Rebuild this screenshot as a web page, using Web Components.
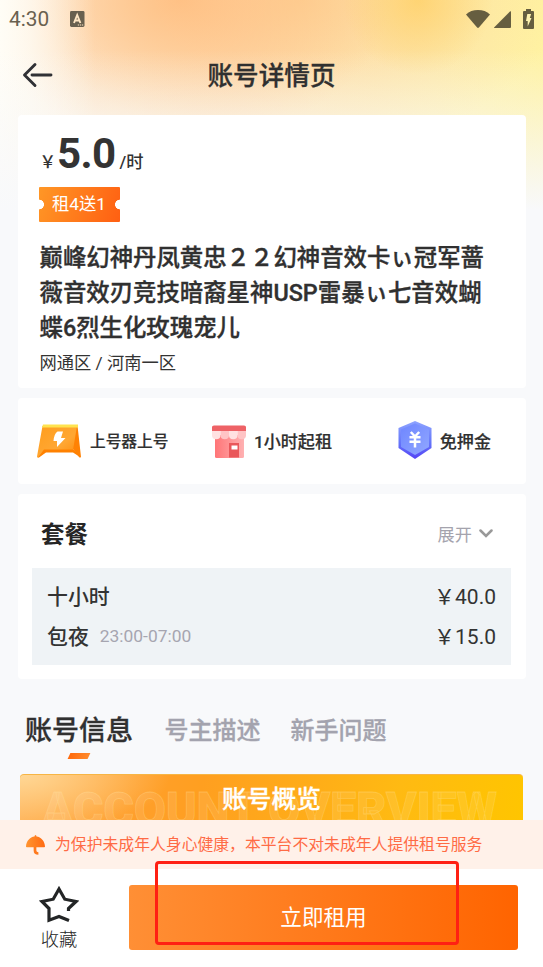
<!DOCTYPE html>
<html lang="zh-CN">
<head>
<meta charset="utf-8">
<title>账号详情页</title>
<style>
html,body{margin:0;height:100%;overflow:hidden}
body{font-family:Roboto,"Noto Sans CJK SC",sans-serif;color:#333}
</style>
</head>
<body>
<rental-page></rental-page>
<script>
const define = (name, html) => customElements.define(name, class extends HTMLElement {
  constructor() {
    super();
    const t = document.createElement('template');
    t.innerHTML = html;
    this.attachShadow({mode: 'open'}).appendChild(t.content.cloneNode(true));
  }
});

define('status-bar', `
<style>
:host{display:flex;height:37px;align-items:center;box-sizing:border-box;padding:1px 9.500px 0 9px;color:#69604f;font-size:20.8px}
.n{margin-left:21px;margin-right:auto}
svg{display:block}
.w{margin-right:4px}.s{margin-right:12px}
</style>
<span>4:30</span>
<svg class="n" width="15" height="17" viewBox="0 0 15 17"><rect width="14.5" height="16" y="0" rx="1.4" fill="#69604f"/><path d="M4 12 7.2 4 10.4 12M5 9.5H9.4" stroke="#ffe6c4" stroke-width="1.9" fill="none"/><path d="M7.8 14h1.4m.8 0h1.2m.8 0h1.2" stroke="#ffe6c4" stroke-width="1.2"/></svg>
<svg class="w" width="24" height="18" viewBox="0 0 24 18"><path d="M0 4.4C3.2 1.4 7.2 0 12 0s8.800 1.400 12 4.400L12.900 17.500q-.9.900-1.800 0z" fill="#665e40"/></svg>
<svg class="s" width="17" height="17" viewBox="0 0 17 17"><path d="M17 .4V16q0 1-1 1H.5Q-.3 17 .3 16.300L16.200.3Z" fill="#665e40"/></svg>
<svg width="11" height="20" viewBox="0 0 11 20"><path d="M3 0h5v2h2q1 0 1 1v16q0 1-1 1H1q-1 0-1-1V3q0-1 1-1h2z" fill="#665e40"/><path d="M4.300 5h3.800L6.800 9H8.500L4.700 17.500V12H3z" fill="#fff3b0"/></svg>`);

define('nav-header', `
<style>
:host{display:grid;grid-template-columns:60px 1fr 60px;align-items:center;height:78px}
svg{display:block;margin:-2px 0 0 22px}
h1{margin:0;text-align:center;font-size:25.6px;line-height:36px;font-weight:500;color:#303030;-webkit-text-stroke:.3px}
</style>
<svg width="31" height="26" viewBox="0 0 31 26"><path d="M13 2.500 2.500 13 13 23.500M10 13h19" fill="none" stroke="#303135" stroke-width="2.900" stroke-linecap="round" stroke-linejoin="round"/></svg>
<h1><slot></slot></h1>`);

define('info-card', `<style>:host{display:block;background:#fff;border-radius:4px;box-sizing:border-box}</style><slot></slot>`);

define('price-tag', `
<style>
:host{display:flex;align-items:baseline;height:60px;line-height:60px;white-space:nowrap;font-weight:500}
.y{font-size:16.500px;width:17.500px}.v{font-size:42px;font-weight:700;letter-spacing:-.6px}.u{font-size:17.300px;margin-left:4px}
</style><span class="y">￥</span><span class="v"><slot></slot></span><span class="u">/时</span>`);

define('promo-ticket', `
<style>
:host{display:flex;align-items:center;justify-content:center;width:81px;height:35px;border-radius:1px;color:#fff;font-size:17.300px;line-height:35px;
background:radial-gradient(circle at 0 50%,#fff 4.600px,transparent 5.200px),radial-gradient(circle at 100% 50%,#fff 4.600px,transparent 5.200px),linear-gradient(110deg,#ff9726,#ff5f12)}
</style><slot></slot>`);

define('service-item', `
<style>
:host{display:flex;align-items:center;font-size:17.100px;font-weight:500;white-space:nowrap;line-height:24px;color:#303030;-webkit-text-stroke:.2px}
span{padding-top:2px}
</style><slot name="icon"></slot><span><slot></slot></span>`);

define('plan-row', `
<style>
:host{display:flex;align-items:center;height:40px;font-size:20.900px;font-weight:500}
.t{font-size:17.400px;color:#a6a5b0;margin-left:11px;font-weight:400;padding-top:2px}
.p{margin-left:auto;font-size:21px;font-weight:400;padding-top:1px}
</style><span><slot></slot></span><span class="t"><slot name="time"></slot></span><span class="p"><slot name="price"></slot></span>`);

define('tab-strip', `
<style>
:host{display:flex;align-items:flex-start;padding:22px 0 0 25px;height:86px;box-sizing:border-box;font-weight:500;font-size:24px;line-height:40px;color:#a3a3ae;white-space:nowrap;-webkit-text-stroke:.3px}
.on{display:flex;flex-direction:column;align-items:center;font-size:27px;line-height:42px;color:#303030;margin-right:31.500px}
.on i{width:20px;height:6px;margin-top:1px;background:linear-gradient(90deg,#ff6a0c,#ff8a2c);transform:skewX(-25deg)}
.b{margin-right:30px}
.b,.c{padding-top:1px}
</style><div class="on"><span>账号信息</span><i></i></div><span class="b">号主描述</span><span class="c">新手问题</span>`);

define('overview-banner', `
<style>
:host{display:grid;height:46px;overflow:hidden;margin:0 20px;border-radius:4px 4px 0 0;box-sizing:border-box;border-top:1px solid #f7b544;background:radial-gradient(ellipse 150px 60px at 0 0,#ffd795,rgba(255,190,90,0)),linear-gradient(100deg,#ffae50 0,#ff9f2b 24%,#ff9f20 36%,#ffad18 58%,#ffba12 75%,#ffc500 100%)}
svg,span{grid-area:1/1}
svg{display:block}
span{text-align:center;font-size:24.700px;line-height:50px;height:45px;font-weight:500;color:#fff;-webkit-text-stroke:.3px}
text{font:900 49px Roboto,sans-serif;fill:rgba(255,255,255,.1);stroke:rgba(255,235,170,.28);stroke-width:.8}
</style>
<svg width="503" height="45"><text x="22" y="50.500" textLength="455" lengthAdjust="spacingAndGlyphs">ACCOUNT OVERVIEW</text></svg>
<span><slot></slot></span>`);

define('notice-bar', `
<style>
:host{display:flex;align-items:center;height:49px;background:#fff1e9;color:#ff6b45;font-size:15.830px;white-space:nowrap}
svg{display:block;margin:1px 10px 0 26px}
span{padding-bottom:2px}
</style>
<svg width="19" height="20" viewBox="0 0 19 20"><defs><linearGradient id="u"><stop stop-color="#ff9430"/><stop offset="1" stop-color="#ff6a12"/></linearGradient></defs><path d="M0 11.500C.2 6 4 2 8.500 1.500q.1-1.500 1-1.500t1 1.500C15 2 18.800 6 19 11.500q0 .8-.8.800H.8Q0 12.300 0 11.500Z" fill="url(#u)"/><path d="M9 12v3.500q0 3 3.400 3" fill="none" stroke="#ff7a1e" stroke-width="2.700"/></svg>
<span><slot></slot></span>`);

define('action-footer', `
<style>
:host{display:flex;position:relative;align-items:flex-start;height:98px;background:#fff;padding:16px 25px 0 0;box-sizing:border-box}
.fav{width:118px;margin-right:11px;display:flex;flex-direction:column;align-items:center;font-size:18.300px;font-weight:300;color:#252525}
.fav svg{display:block;margin:1px 0 2px}
.fav span{line-height:36px;margin-top:-4px}
button{flex:1;border:0;padding:0;height:65px;border-radius:3px;background:linear-gradient(90deg,#ff8f35,#ff6400);color:#fff;font:400 21.600px/65px Roboto,"Noto Sans CJK SC",sans-serif}
.mark{position:absolute;left:155px;top:-8px;width:304px;height:84px;box-sizing:border-box;border:3px solid #ff2013;border-radius:4px}
</style>
<div class="fav"><svg width="40" height="38" viewBox="0 0 40 38"><path d="M29.500 25V22.500L37 15.500 25.800 13.200 20 3 14.200 13.200 3 15.500 10 22.500V34.200L20 30.400 30 34.600" fill="none" stroke="#232526" stroke-width="3.200"/></svg><span>收藏</span></div>
<button>立即租用</button><div class="mark"></div>`);

define('rental-page', `
<style>
:host{display:flex;flex-direction:column;height:967px;width:543px;overflow:hidden;
background:
linear-gradient(180deg,rgba(248,249,251,0) 50px,#f8f9fb 210px),
linear-gradient(90deg,#fffdf6 0,rgba(255,253,246,.75) 30px,rgba(255,253,246,0) 95px),
radial-gradient(ellipse 75px 75px at 418px 0,rgba(255,208,100,.75),rgba(255,208,100,0)),
radial-gradient(ellipse 210px 140px at 180px 0,rgba(255,188,125,.85),rgba(255,190,130,0)),
radial-gradient(ellipse 260px 150px at 300px 0,rgba(255,190,115,.55),rgba(255,200,130,0)),
linear-gradient(90deg,#fdeedd 0,#fdeccd 45%,#fdf0b5 80%,#fff2a2 100%)}
:host>*{flex-shrink:0}
info-card{margin:0 17.500px 10px}
.main{height:273px;padding:9px 22px 0}
promo-ticket{margin:3px 0 18.500px -1px}
h2{margin:0;font-size:23.400px;line-height:35px;font-weight:500;white-space:nowrap;color:#303030;-webkit-text-stroke:.35px}
.area{font-size:17.250px;line-height:36px;margin-top:-.5px}
.svc{height:86px}
.svc div{display:flex;height:86px;align-items:center;padding:0 34.500px 0 19.500px}
.svc svg{display:block}
.a{font-size:15.700px;margin-right:43.500px}.a svg{margin-right:9px}.b svg{margin-right:8px}.c{margin-left:auto}.c svg{margin:-2px 8px 0 0}
.plan{height:185px;padding:18px 14.500px 0;margin-bottom:0}
.head{display:flex;align-items:center;justify-content:space-between;height:42px;padding:0 18px 0 9px}
.head b{font-size:23.400px;font-weight:700;color:#252525;padding-bottom:1px}
.more{display:flex;align-items:center;font-size:17.200px;color:#a4a3ad;gap:7px}
.more svg{margin-top:1px}
.box{margin-top:13.500px;height:97.500px;box-sizing:border-box;background:#eff3f6;padding:7px 15px 0 15px}
tab-strip{margin-top:9px}
</style>
<status-bar></status-bar>
<nav-header>账号详情页</nav-header>
<info-card class="main">
 <price-tag>5.0</price-tag>
 <promo-ticket>租4送1</promo-ticket>
 <h2>巅峰幻神丹凤黄忠２２幻神音效卡ぃ冠军蔷<br>薇音效刃竞技暗裔星神USP雷暴ぃ七音效蝴<br>蝶6烈生化玫瑰宠儿</h2>
 <div class="area">网通区 / 河南一区</div>
</info-card>
<info-card class="svc"><div>
 <service-item class="a"><svg slot="icon" width="44" height="34" viewBox="0 0 44 34"><defs><linearGradient id="o" x2="1" y2="1"><stop stop-color="#ff9d1c"/><stop offset=".6" stop-color="#ffa733"/><stop offset="1" stop-color="#ff8a08"/></linearGradient></defs><path d="M6 1.500H40.500L44 33Q43 34 42 33L37 26Z" fill="#ff8204"/><path d="M5.500 2H40L36 26 38 28H7L1.500 33.500Q0 34 0 32.500Z" fill="url(#o)"/><path d="M7 25.500H37L43 33 36 28.500H9L2 33.500H1Z" fill="#ff8100"/><path d="M6 .5H41V3.500H5Z" fill="#ffe34e"/><path d="M20.500 7.500H26L24 14H28.500L20 23V17H16.500Q17 10 20.500 7.500Z" fill="#fff"/></svg>上号器上号</service-item>
 <service-item class="b"><svg slot="icon" width="34" height="33" viewBox="0 0 34 33"><defs><linearGradient id="p"><stop stop-color="#ff7577"/><stop offset="1" stop-color="#ffb1b2"/></linearGradient></defs><rect x="3" y="10" width="29" height="23" rx="1.500" fill="url(#p)"/><path d="M0 6V2Q0 .5 2 .5H32Q34 .5 34 2V6Z" fill="#ee6266"/><path d="M0 6H8.500V10.500A4.250 3.700 0 0 1 0 10.500ZM17 6H25.500V10.500A4.250 3.700 0 0 1 17 10.500Z" fill="#ffe1e1"/><path d="M8.500 6H17V10.500A4.250 3.700 0 0 1 8.500 10.500ZM25.500 6H34V10.500A4.250 3.700 0 0 1 25.500 10.500Z" fill="#ffc4c5"/><path d="M17 18H27V32.500H17Z" fill="#e9575a"/><path d="M19.500 20.500h6v4h-6z" fill="#fff"/></svg>1小时起租</service-item>
 <service-item class="c"><svg slot="icon" width="34" height="38" viewBox="0 0 34 38"><defs><linearGradient id="h" x2="0" y2="1"><stop stop-color="#8ea4ff"/><stop offset=".55" stop-color="#6678fa"/><stop offset="1" stop-color="#5443f5"/></linearGradient><linearGradient id="i" x2="1" y2="1"><stop stop-color="#6e86ff"/><stop offset="1" stop-color="#91a7ff"/></linearGradient></defs><path d="M17 0 33.500 7V27L17 38 .5 27V7Z" fill="url(#h)"/><path d="M17 2.500 31 8.500V26L17 34 3 26V8.500Z" fill="url(#i)"/><path d="M12.800 11 17 15.500 21.200 11M17 15V26.500M11.500 16.300h11M11.500 20.800h11" stroke="#fff" stroke-width="2.500" fill="none"/></svg>免押金</service-item>
</div></info-card>
<info-card class="plan">
 <div class="head"><b>套餐</b><span class="more">展开<svg width="14" height="10" viewBox="0 0 14 10"><path d="M1.500 1.500 7 7 12.500 1.500" fill="none" stroke="#999" stroke-width="2.500" stroke-linecap="round"/></svg></span></div>
 <div class="box"><plan-row>十小时<span slot="price">￥40.0</span></plan-row><plan-row>包夜<span slot="time">23:00-07:00</span><span slot="price">￥15.0</span></plan-row></div>
</info-card>
<tab-strip></tab-strip>
<overview-banner>账号概览</overview-banner>
<notice-bar>为保护未成年人身心健康，本平台不对未成年人提供租号服务</notice-bar>
<action-footer></action-footer>`);
</script>
</body>
</html>
